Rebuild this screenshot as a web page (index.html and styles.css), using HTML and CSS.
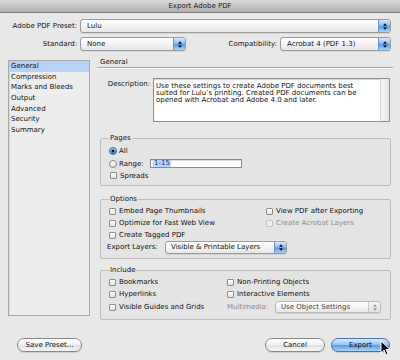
FILE: index.html
```html
<!DOCTYPE html>
<html>
<head>
<meta charset="utf-8">
<title>Export Adobe PDF</title>
<link rel="stylesheet" href="styles.css">
</head>
<body>
<div class="window">
  <div class="titlebar">Export Adobe PDF</div>

  <div class="topgrid">
    <span class="lbl">Adobe PDF Preset:</span>
    <div class="popup span3"><span class="val">Lulu</span><span class="step"><svg viewBox="0 0 6 10"><polygon points="3,0 6,4 0,4"/><polygon points="0,6 6,6 3,10"/></svg></span></div>
    <span class="lbl">Standard:</span>
    <div class="popup"><span class="val">None</span><span class="step"><svg viewBox="0 0 6 10"><polygon points="3,0 6,4 0,4"/><polygon points="0,6 6,6 3,10"/></svg></span></div>
    <span class="lbl">Compatibility:</span>
    <div class="popup"><span class="val">Acrobat 4 (PDF 1.3)</span><span class="step"><svg viewBox="0 0 6 10"><polygon points="3,0 6,4 0,4"/><polygon points="0,6 6,6 3,10"/></svg></span></div>
  </div>

  <div class="main">
    <ul class="sidebar">
      <li class="sel">General</li>
      <li>Compression</li>
      <li>Marks and Bleeds</li>
      <li>Output</li>
      <li>Advanced</li>
      <li>Security</li>
      <li>Summary</li>
    </ul>

    <div class="panel">
      <div class="panel-head">General</div>

      <div class="desc-row">
        <span class="desc-lbl">Description:</span>
        <div class="desc-box">
          <p>Use these settings to create Adobe PDF documents best<br>suited for Lulu’s printing. Created PDF documents can be<br>opened with Acrobat and Adobe 4.0 and later.</p>
          <div class="scroll"></div>
        </div>
      </div>

      <fieldset class="group pages">
        <legend>Pages</legend>
        <div class="row h12"><span class="radio on"></span>All</div>
        <div class="row h13"><span class="radio"></span><span class="range-lbl">Range:</span><span class="field"><span class="hl">1-15</span></span></div>
        <div class="row h11"><span class="check ml1"></span>Spreads</div>
      </fieldset>

      <fieldset class="group options">
        <legend>Options</legend>
        <div class="opts">
          <div class="row"><span class="check"></span>Embed Page Thumbnails</div>
          <div class="row"><span class="check"></span>View PDF after Exporting</div>
          <div class="row"><span class="check"></span>Optimize for Fast Web View</div>
          <div class="row dis"><span class="check"></span>Create Acrobat Layers</div>
          <div class="row full"><span class="check"></span>Create Tagged PDF</div>
          <div class="row full layers">
            <span class="layers-lbl">Export Layers:</span>
            <div class="popup small w122"><span class="val">Visible &amp; Printable Layers</span><span class="step"><svg viewBox="0 0 6 10"><polygon points="3,0 6,4 0,4"/><polygon points="0,6 6,6 3,10"/></svg></span></div>
          </div>
        </div>
      </fieldset>

      <fieldset class="group include">
        <legend>Include</legend>
        <div class="incl">
          <div class="row"><span class="check"></span>Bookmarks</div>
          <div class="row"><span class="check"></span>Non-Printing Objects</div>
          <div class="row"><span class="check"></span>Hyperlinks</div>
          <div class="row"><span class="check"></span>Interactive Elements</div>
          <div class="row"><span class="check"></span>Visible Guides and Grids</div>
          <div class="row">
            <span class="mm-lbl">Multimedia:</span>
            <div class="popup small disabled w106"><span class="val">Use Object Settings</span><span class="step"><svg viewBox="0 0 6 10"><polygon points="3,0 6,4 0,4"/><polygon points="0,6 6,6 3,10"/></svg></span></div>
          </div>
        </div>
      </fieldset>
    </div>
  </div>

  <div class="footer">
    <div class="btn save">Save Preset...</div>
    <div class="btn cancel">Cancel</div>
    <div class="btn export">Export</div>
  </div>

  <svg class="cursor" viewBox="0 0 11 17" width="11" height="17"><path d="M1 1 L1 13 L4 10 L6 15 L8 14 L6 9.5 L10 9.5 Z" fill="#000" stroke="#fff" stroke-width="1"/></svg>
</div>
</body>
</html>
```

FILE: styles.css
```css
* { box-sizing: border-box; }
html, body { margin: 0; padding: 0; }
body { background: #e8e8e8; }

.window {
  width: 400px;
  height: 360px;
  position: relative;
  overflow: hidden;
  background: #e8e8e8;
  font-family: "DejaVu Sans", "Liberation Sans", sans-serif;
  font-size: 7px;
  color: #111;
}

.titlebar {
  height: 13px;
  line-height: 12px;
  text-align: center;
  background: linear-gradient(#dadada, #b0b0b0);
  border-bottom: 1px solid #7c7c7c;
  color: #222;
}

.topgrid {
  display: grid;
  grid-template-columns: 67px 106px 88px 111px;
  grid-template-rows: 14px 14px;
  column-gap: 3px;
  row-gap: 4px;
  margin: 6px 0 0 10px;
}
.lbl { text-align: right; align-self: center; white-space: nowrap; }
.span3 { grid-column: 2 / 5; }

.popup {
  display: flex;
  align-items: center;
  height: 14px;
  padding-left: 6px;
  border: 1px solid #9c9c9c;
  border-radius: 3px;
  background: linear-gradient(#ffffff, #f4f4f4 50%, #e6e6e6);
  box-shadow: 0 1px 0 rgba(0,0,0,0.08);
  white-space: nowrap;
  overflow: hidden;
}
.popup .val { flex: 1; overflow: hidden; }
.step {
  flex: none;
  width: 12px;
  height: 100%;
  display: flex;
  align-items: center;
  justify-content: center;
  background: linear-gradient(#dbeafc, #8cbcf2 45%, #5d9ae6 55%, #a9d0f9);
  border-left: 1px solid #6d93c8;
}
.step svg { width: 4px; height: 7px; display: block; fill: #111; }
.popup.small { height: 13px; padding-left: 5px; }
.w122 { width: 122px; }
.w106 { width: 106px; height: 12px !important; }
.popup.disabled { color: #444; border-color: #b8b8b8; }
.popup.disabled .step { background: linear-gradient(#f4f4f4, #e2e2e2); border-left-color: #c8c8c8; }
.popup.disabled .step svg { fill: #9a9a9a; }

.main {
  display: flex;
  align-items: flex-start;
  margin: 7px 0 0 8px;
}
.sidebar {
  list-style: none;
  margin: 2px 0 0 0;
  padding: 0;
  width: 82px;
  height: 256px;
  border: 1px solid #a9a9a9;
  background: #ededed;
  box-shadow: inset 1px 0 0 #d6d6d6;
}
.sidebar li { height: 10.66px; line-height: 10.66px; padding-left: 2px; white-space: nowrap; }
.sidebar li.sel { background: #b6d2f4; }

.panel { margin-left: 7px; width: 296px; }
.panel-head {
  height: 10px;
  line-height: 9px;
  padding-left: 3px;
  border-bottom: 1px solid #a8a8a8;
  box-shadow: 0 1px 0 #fafafa;
}

.desc-row { display: flex; margin-top: 10px; }
.desc-lbl { width: 53px; text-align: right; padding-top: 2px; line-height: 8px; }
.desc-box {
  margin-left: 3px;
  width: 237px;
  height: 44px;
  display: flex;
  background: #fff;
  border: 1px solid #8e8e8e;
  box-shadow: inset 0 1px 1px rgba(0,0,0,0.18);
}
.desc-box p { margin: 0; padding: 4px 0 0 2px; line-height: 7.2px; flex: 1; white-space: nowrap; }
.scroll { width: 9px; border-left: 1px solid #d4d4d4; background: linear-gradient(to right, #f7f7f7, #e4e4e4); }

.group {
  margin: 0 2px 0 3px;
  padding: 0 0 0 8px;
  border: 1px solid #bdbdbd;
  border-radius: 2px;
  background: #e4e4e4;
  min-width: 0;
}
.group legend { padding: 0 1px; line-height: 8px; height: 8px; }
.pages { margin-top: 12px; padding-top: 3px; padding-bottom: 4px; }
.options { margin-top: 9px; padding-top: 2px; padding-bottom: 5px; }
.include { margin-top: 7px; padding-top: 2px; padding-bottom: 6px; }

.row { display: flex; align-items: center; height: 12px; white-space: nowrap; }
.h12 { height: 12px; } .h13 { height: 13px; } .h11 { height: 11px; }

.check {
  flex: none;
  width: 7px;
  height: 7px;
  margin-right: 3px;
  border: 1px solid #8d8d8d;
  border-radius: 1px;
  background: linear-gradient(#ffffff, #e2e2e2);
}
.ml1 { margin-left: 1px; }
.radio {
  flex: none;
  width: 8px;
  height: 8px;
  margin-right: 2px;
  border-radius: 50%;
  border: 1px solid #8a8a8a;
  background: linear-gradient(#ffffff, #dedede);
}
.radio.on {
  border-color: #3d67a8;
  background: radial-gradient(circle, #161616 0 1.2px, transparent 1.8px), linear-gradient(#b4d6f8, #3c86df);
}
.range-lbl { width: 31px; }
.field {
  width: 92px;
  height: 9px;
  display: flex;
  align-items: center;
  padding-left: 2px;
  background: #fff;
  border: 1px solid #8b8b8b;
  box-shadow: inset 0 1px 1px rgba(0,0,0,0.15);
}
.hl { background: #b5d5fd; padding: 0 1px; line-height: 7px; color: #1d2e6b; }

.dis { color: #8d8d8d; }
.dis .check { border-color: #c2c2c2; background: #f0f0f0; }

.opts { display: grid; grid-template-columns: 157px 1fr; grid-auto-rows: 12px; }
.full { grid-column: 1 / -1; }
.layers { margin-left: -2px; }
.layers-lbl { width: 55px; margin-right: 3px; }

.incl { display: grid; grid-template-columns: 118px 1fr; grid-template-rows: 12px 13px 12px; }
.mm-lbl { width: 44px; margin-right: 4px; color: #8d8d8d; }

.footer { display: flex; margin-top: 18px; padding: 0 10px 0 17px; }
.btn {
  height: 14px;
  display: flex;
  align-items: center;
  justify-content: center;
  border-radius: 7px;
  border: 1px solid #888;
  background: linear-gradient(#ffffff, #f3f3f3 45%, #e0e0e0 55%, #f6f6f6);
  box-shadow: 0 1px 1px rgba(0,0,0,0.12);
  white-space: nowrap;
}
.save { width: 65px; }
.cancel { width: 60px; margin-left: auto; }
.export {
  width: 59px;
  margin-left: 6px;
  border-color: #4a73ad;
  background: linear-gradient(#d6e9fd, #9ac6f6 45%, #5c9ce9 55%, #a8d3fb);
}

.cursor { position: absolute; left: 380px; top: 340px; }
```
